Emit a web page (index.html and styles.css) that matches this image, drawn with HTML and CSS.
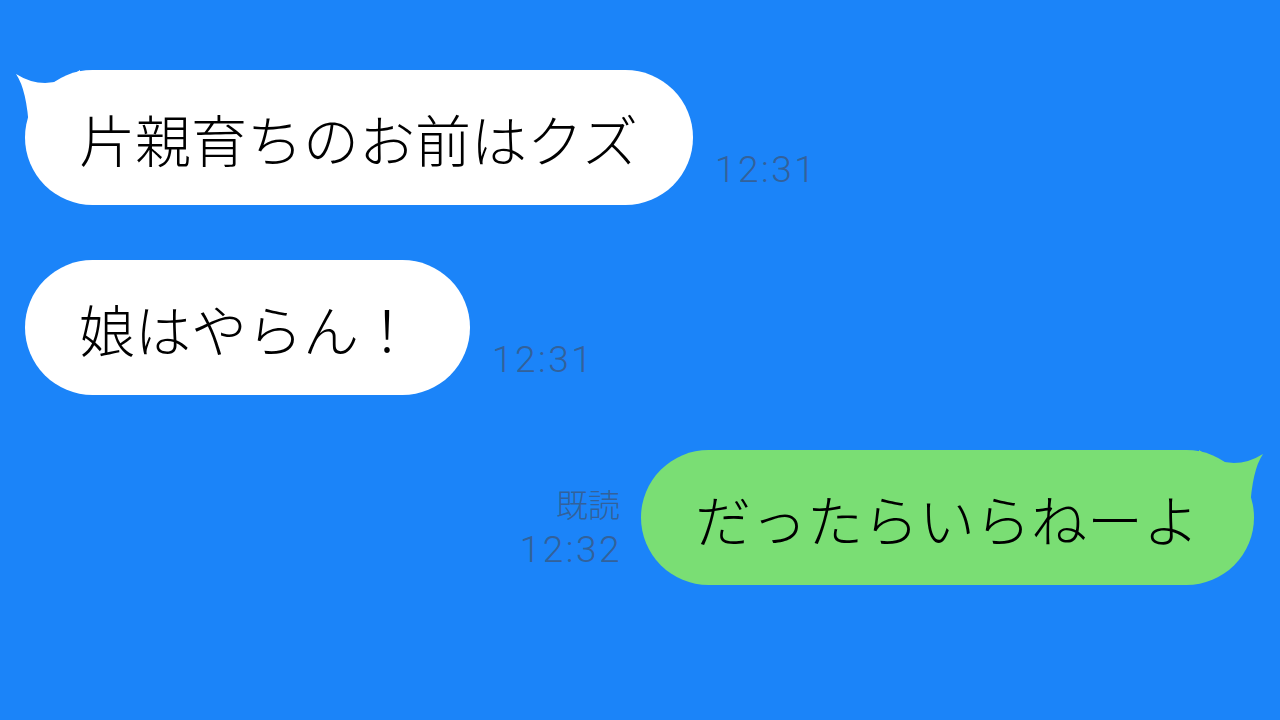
FILE: index.html
```html
<!DOCTYPE html>
<html lang="ja">
<head>
<meta charset="utf-8">
<link rel="stylesheet" href="styles.css">
</head>
<body>
<div class="chat">
  <div class="row left">
    <div class="bubble white">
      <svg class="tail" viewBox="0 0 72 60" width="72" height="60"><path d="M3,4 Q35,24 67,0 L67,60 L16,60 Q14,20 3,4 Z" fill="#ffffff"/></svg>
      <span class="text">片親育ちのお前はクズ</span>
    </div>
    <div class="meta"><span class="time">12:31</span></div>
  </div>
  <div class="row left">
    <div class="bubble white">
      <span class="text">娘はやらん！</span>
    </div>
    <div class="meta"><span class="time">12:31</span></div>
  </div>
  <div class="row right">
    <div class="meta meta-right"><span class="read">既読</span><span class="time">12:32</span></div>
    <div class="bubble green">
      <svg class="tail tail-right" viewBox="0 0 72 60" width="72" height="60"><path d="M3,4 Q35,24 67,0 L67,60 L16,60 Q14,20 3,4 Z" fill="#7ade74"/></svg>
      <span class="text">だったらいらねーよ</span>
    </div>
  </div>
</div>
</body>
</html>
```
FILE: styles.css
```css
html, body {
  margin: 0;
  padding: 0;
}
body {
  width: 1280px;
  height: 720px;
  background: #1b84f9;
  font-family: "Noto Sans CJK JP", "Noto Sans", sans-serif;
  overflow: hidden;
}
.chat {
  display: flex;
  flex-direction: column;
  gap: 55px;
  padding: 70px 26px 0 25px;
}
.row {
  display: flex;
  align-items: flex-end;
}
.row.right {
  justify-content: flex-end;
}
.bubble {
  position: relative;
  height: 135px;
  box-sizing: border-box;
  border-radius: 68px;
  padding: 0 55px 0 54px;
  display: flex;
  align-items: center;
}
.bubble.white {
  background: #ffffff;
}
.bubble.green {
  background: #7ade74;
}
.text {
  font-size: 56px;
  font-weight: 300;
  line-height: 1;
  color: #000000;
  position: relative;
}
.tail {
  position: absolute;
  left: -12px;
  top: 0;
}
.tail-right {
  left: auto;
  right: -12px;
  transform: scaleX(-1);
}
.meta {
  display: flex;
  flex-direction: column;
  margin: 0 0 17px 22px;
  color: #33619a;
  line-height: 1;
}
.meta-right {
  align-items: flex-end;
  margin: 0 19px 17px 0;
}
.time {
  font-family: Roboto, "Liberation Sans", sans-serif;
  font-size: 37px;
  font-weight: 300;
  letter-spacing: 2.5px;
}
.read {
  font-size: 32px;
  font-weight: 300;
  margin-bottom: 12px;
  margin-right: 2px;
}
```
